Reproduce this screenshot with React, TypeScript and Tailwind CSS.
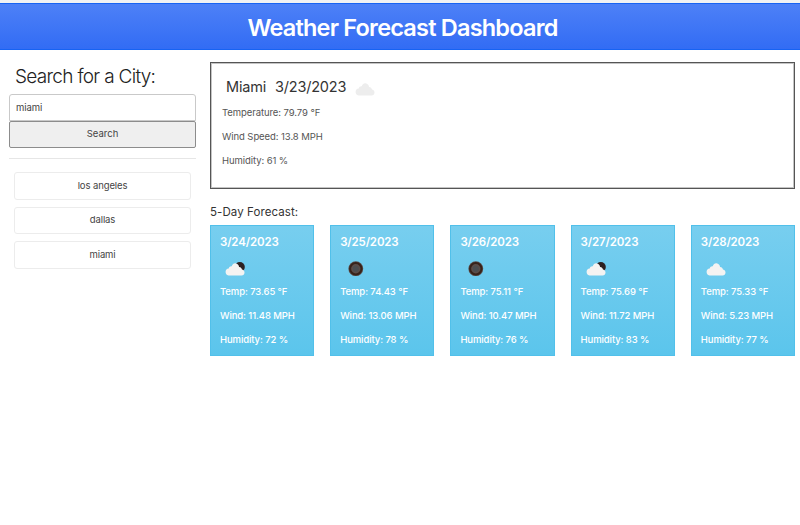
import React from "react";

type IconKind = "cloud" | "cloudMoon" | "night";

const CLOUD = "M4 15.5a3.6 3.6 0 0 1 .2-7.1C4.600 6.700 6 6 7.200 6.200 8 4 9.400 3 11 3.200c2 .2 3.300 1.700 3.600 3.700 1.900.2 2.700 1.300 2.900 2.600 2 .5 2.500 1.900 2.500 3.100 0 1.800-1.300 2.900-2.900 2.900z";

function WeatherIcon({ kind, fill = "#f4f3f2" }: { kind: IconKind; fill?: string }) {
  return (
    <svg viewBox="0 0 21 17" className="block h-[17px] w-[21px]">
      {kind === "night" && (
        <>
          <circle cx="10.800" cy="8.700" r="7.400" fill="#5a4c48" />
          <circle cx="10.800" cy="8.700" r="5.700" fill="none" stroke="#38221a" strokeWidth="2" />
          <circle cx="10.800" cy="8.700" r="3" fill="#4b4c4f" />
        </>
      )}
      {kind === "cloudMoon" && <circle cx="14.800" cy="7" r="5" fill="#2d2020" />}
      {kind !== "night" && (
        <g transform="translate(-0.5 0)">
          <path d={CLOUD} fill={fill} />
        </g>
      )}
    </svg>
  );
}

const history = ["los angeles", "dallas", "miami"];

const days: { date: string; icon: IconKind; temp: string; wind: string; humidity: string }[] = [
  { date: "3/24/2023", icon: "cloudMoon", temp: "73.65", wind: "11.48", humidity: "72" },
  { date: "3/25/2023", icon: "night", temp: "74.43", wind: "13.06", humidity: "78" },
  { date: "3/26/2023", icon: "night", temp: "75.11", wind: "10.47", humidity: "76" },
  { date: "3/27/2023", icon: "cloudMoon", temp: "75.69", wind: "11.72", humidity: "83" },
  { date: "3/28/2023", icon: "cloud", temp: "75.33", wind: "5.23", humidity: "77" },
];

export default function App() {
  return (
    <div className="h-[525px] w-[800px] overflow-hidden bg-white pt-[3px] font-['Inter','Liberation_Sans',sans-serif] text-[#333] shadow-[inset_0_3px_0_#f1f1f3]">
      <header className="flex h-[47px] items-center justify-center border-y border-[#1763f3] bg-linear-to-b from-[#4d80f7] to-[#326cf4] pl-[5px] pt-[2px]">
        <h1 className="whitespace-nowrap text-[23.500px] font-semibold tracking-[-0.800px] text-white">Weather Forecast Dashboard</h1>
      </header>

      <div className="flex">
        <aside className="w-[210px] pl-[9px] pr-[14px] pt-[14px]">
          <h2 className="whitespace-nowrap pl-[6px] text-[19px] font-light leading-[26px] tracking-[-0.700px] text-[#222]">Search for a City:</h2>
          <input
            defaultValue="miami"
            className="mt-[4px] block h-[27px] w-full rounded-t-[3px] border border-[#c9c9c9] bg-white px-[6px] text-[9.500px] tracking-[-0.1px] text-[#444] outline-none"
          />
          <button className="block h-[27px] w-full rounded-[2px] border border-[#8c8c8c] bg-[#efefef] text-[9.500px] text-[#444]">Search</button>
          <hr className="mt-[10px] border-[#e6e6e6]" />
          <div className="mt-[13px] flex flex-col gap-[7px] px-[5px]">
            {history.map((city) => (
              <button key={city} className="h-[27.500px] rounded-[3px] border border-[#ececec] text-[9.500px] tracking-[-0.1px] text-[#444]">
                {city}
              </button>
            ))}
          </div>
        </aside>

        <main className="w-[585px] pt-[12px]">
          <section className="h-[127px] border border-[#555] pl-[11px] pt-[13px] shadow-[inset_0_0_0_1px_#c4c4c4]">
            <div className="flex h-[24px] items-center pl-[4px] text-[14.500px] tracking-[-0.2px]">
              <span className="mt-[-2px] w-[49px]">Miami</span>
              <span className="mt-[-2px] w-[80px]">3/23/2023</span>
              <span className="mt-[1px]"><WeatherIcon kind="cloud" fill="#ededed" /></span>
            </div>
            <div className="mt-[1px] text-[9.500px] leading-[24px] tracking-[-0.080px] text-[#555]">
              <p>Temperature: 79.79 °F</p>
              <p>Wind Speed: 13.8 MPH</p>
              <p>Humidity: 61 %</p>
            </div>
          </section>

          <h3 className="mt-[15px] h-[21px] text-[11.500px] leading-[16px] tracking-[0.080px]">5-Day Forecast:</h3>
          <div className="grid grid-cols-5 gap-4">
            {days.map((day) => (
              <article key={day.date} className="h-[131px] whitespace-nowrap border border-[#51c0ea] bg-linear-to-b from-[#77ceef] to-[#5bc5ec] pl-[9px] pt-[8px] text-white">
                <h4 className="text-[11.500px] font-semibold leading-[16px] tracking-[-0.150px]">{day.date}</h4>
                <div className="ml-[5px] mt-[10px] h-[20px]"><WeatherIcon kind={day.icon} /></div>
                <div className="text-[9.500px] font-medium leading-[24.200px] tracking-[-0.100px]">
                  <p>Temp: {day.temp} °F</p>
                  <p>Wind: {day.wind} MPH</p>
                  <p>Humidity: {day.humidity} %</p>
                </div>
              </article>
            ))}
          </div>
        </main>
      </div>
    </div>
  );
}
